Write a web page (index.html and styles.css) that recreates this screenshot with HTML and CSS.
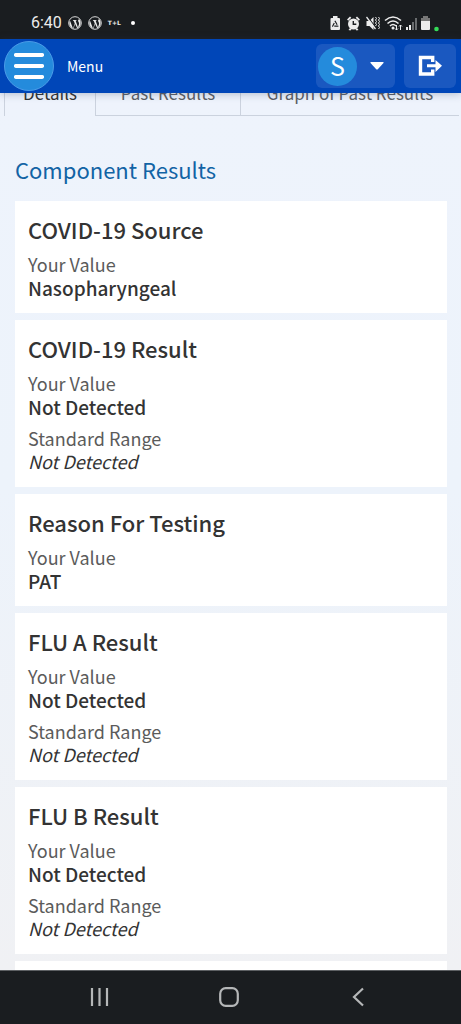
FILE: index.html
```html
<!DOCTYPE html>
<html lang="en">
<head>
<meta charset="utf-8">
<meta name="viewport" content="width=device-width, initial-scale=1">
<title>Component Results</title>
<link rel="stylesheet" href="styles.css">
</head>
<body>
<div class="screen">
  <div class="status">
    <div class="status-group">
      <span class="clock">6:40</span>
      <svg class="wp" viewBox="0 0 24 24" aria-hidden="true"><circle cx="12" cy="12" r="10.8" fill="none" stroke="#e8e8e8" stroke-width="1.6"/><path d="M3.5 8l5 13.4 3.1-8.7L9.7 8H8.5V7h6v1h-1.4l4 11.5 1.7-5.5c.8-2.7-1.5-4-1.5-5.8 0-1.5 1-2.5 2.200-2.500 2 2.500 2.700 5.500 1.700 9.300-1 3.200-3 5-5.200 6.300L12.200 13.500l-3 8.500C5 20.500 2.300 16.500 2.300 12c0-1.500.4-2.800 1.200-4z" fill="#e8e8e8"/></svg>
      <svg class="wp" viewBox="0 0 24 24" aria-hidden="true"><circle cx="12" cy="12" r="10.8" fill="none" stroke="#e8e8e8" stroke-width="1.6"/><path d="M3.5 8l5 13.4 3.1-8.7L9.7 8H8.5V7h6v1h-1.4l4 11.5 1.7-5.5c.8-2.7-1.5-4-1.5-5.8 0-1.500 1-2.500 2.200-2.500 2 2.500 2.700 5.500 1.700 9.300-1 3.200-3 5-5.200 6.300L12.200 13.500l-3 8.500C5 20.500 2.300 16.500 2.300 12c0-1.500.4-2.800 1.200-4z" fill="#e8e8e8"/></svg>
      <span class="carrier">T+L</span>
      <span class="dot"></span>
    </div>
    <svg class="status-icons" width="112" height="20" viewBox="0 0 112 20" aria-hidden="true">
      <g fill="#ececec">
        <path d="M2.500 5H4V3h4.500v2H10q1 0 1 1v10q0 1-1 1H2.500q-1 0-1-1V6q0-1 1-1z"/>
        <path d="M6.200 8.200l2.700 5H3.600z" fill="none" stroke="#1a1d20" stroke-width="1.200" stroke-linejoin="round" stroke-dasharray="4 1.300"/>
        <circle cx="24.500" cy="11" r="5.500"/><path d="M18 6.500l3-3 1.300 1.300-3 3zM31 6.500l-3-3-1.300 1.300 3 3zM19.500 17l1.500-2 1.500 1-1 1.500zM29.500 17L28 15l-1.500 1 1 1.500z"/>
        <path d="M24.300 8v3.300h3" fill="none" stroke="#1a1d20" stroke-width="1.400"/>
        <path d="M37.500 8h3l4-4v13l-4-4h-3z"/>
        <path d="M38.500 3.500l9 12" stroke="#1a1d20" stroke-width="1.200"/><path d="M37.500 4l9 12" stroke="#ececec" stroke-width="1.300"/>
        <path d="M46.500 4l1 1.500-1 1.500 1 1.500-1 1.500 1 1.500-1 1.500M49.500 4l1 1.500-1 1.500 1 1.500-1 1.500 1 1.500-1 1.500 1 1.500-1 1.500" fill="none" stroke="#ececec" stroke-width="1"/>
      </g>
      <g fill="none" stroke="#ececec" stroke-width="1.600"><path d="M56 7.500q8-7 16 0M58.500 10.500q5.500-5 11 0M61 13q3-3 6 0"/><path d="M67.500 12v5M66 15.500l1.500 1.500 1.500-1.500M71.500 17v-5M70 13.500l1.500-1.500 1.500 1.500" stroke-width="1"/></g>
      <circle cx="64" cy="15" r="1.500" fill="#ececec"/>
      <path d="M77 14h2v3h-2zM80 12h2v5h-2z" fill="#ececec"/>
      <path d="M83 9h2v8h-2zM86 5h2v12h-2z" fill="#696c6e"/>
      <path d="M94 3h5v2h-5zM92 5h9v4h-9z" fill="#777"/><path d="M92 8h9v8q0 1-1 1h-7q-1 0-1-1z" fill="#ececec"/>
      <circle cx="107.500" cy="16" r="2.300" fill="#35dc58"/>
    </svg>
  </div>

  <header class="bar">
    <button class="menu" type="button">
      <span class="menu-circle"><svg width="30" height="26" viewBox="0 0 30 26" aria-hidden="true"><path d="M1.800 2h26.400M1.800 13h26.400M1.800 24h26.400" stroke="#fff" stroke-width="3.800" stroke-linecap="round"/></svg></span>
      <span>Menu</span>
    </button>
    <div class="actions">
      <button class="action account" type="button" aria-label="Account S">
        <span class="avatar">S</span>
        <svg width="14" height="8" viewBox="0 0 14 8" aria-hidden="true"><path d="M1 0h12q1 0 .5 1L8 7q-1 1-2 0L.5 1Q0 0 1 0z" fill="#fff"/></svg>
      </button>
      <button class="action logout" type="button" aria-label="Log out">
        <svg width="26" height="22" viewBox="0 0 26 22" aria-hidden="true"><path d="M15.700 7V2.500H3.500v16.500h12.200V14.500" fill="none" stroke="#fff" stroke-width="3.400"/><path d="M10 9.200h8.500V5l6.500 5.700-6.500 6.300v-4.700H10z" fill="#fff"/></svg>
      </button>
    </div>
  </header>

  <main class="content">
    <nav class="tabs">
      <a class="tab tab-active" href="#details">Details</a>
      <a class="tab" href="#past">Past Results</a>
      <a class="tab tab-wide" href="#graph">Graph of Past Results</a>
    </nav>
    <section class="results" id="details">
      <h1 class="heading">Component Results</h1>
      <article class="card">
        <h2 class="name">COVID-19 Source</h2>
        <dl class="pair"><dt>Your Value</dt><dd>Nasopharyngeal</dd></dl>
      </article>
      <article class="card">
        <h2 class="name">COVID-19 Result</h2>
        <dl class="pair"><dt>Your Value</dt><dd>Not Detected</dd></dl>
        <dl class="pair"><dt>Standard Range</dt><dd class="range">Not Detected</dd></dl>
      </article>
      <article class="card">
        <h2 class="name">Reason For Testing</h2>
        <dl class="pair"><dt>Your Value</dt><dd>PAT</dd></dl>
      </article>
      <article class="card">
        <h2 class="name">FLU A Result</h2>
        <dl class="pair"><dt>Your Value</dt><dd>Not Detected</dd></dl>
        <dl class="pair"><dt>Standard Range</dt><dd class="range">Not Detected</dd></dl>
      </article>
      <article class="card">
        <h2 class="name">FLU B Result</h2>
        <dl class="pair"><dt>Your Value</dt><dd>Not Detected</dd></dl>
        <dl class="pair"><dt>Standard Range</dt><dd class="range">Not Detected</dd></dl>
      </article>
      <article class="card"></article>
    </section>
  </main>

  <nav class="system">
    <button class="key" type="button" aria-label="Recent apps"><svg width="20" height="20" viewBox="0 0 20 20"><path d="M2 1v18M9.500 1v18M17 1v18" stroke="#b5b7b8" stroke-width="2.200"/></svg></button>
    <button class="key" type="button" aria-label="Home"><svg width="20" height="20" viewBox="0 0 20 20"><rect x="1.200" y="1.200" width="17.600" height="17.600" rx="5.500" fill="none" stroke="#b5b7b8" stroke-width="2.200"/></svg></button>
    <button class="key" type="button" aria-label="Back"><svg width="20" height="20" viewBox="0 0 20 20"><path d="M15 1.500L6 10l9 8.500" fill="none" stroke="#b5b7b8" stroke-width="2.200"/></svg></button>
  </nav>
</div>
</body>
</html>
```
FILE: styles.css
```css
* { box-sizing: border-box; }
body {
  margin: 0;
  font-family: "Noto Sans CJK SC", "Open Sans", sans-serif;
  color: #333;
}
button { border: 0; margin: 0; padding: 0; background: none; font: inherit; color: inherit; }
h1, h2, dl, dd { margin: 0; }
svg { display: block; flex: none; }

.screen { display: flex; flex-direction: column; height: 100vh; }

.status {
  flex: none;
  display: flex;
  align-items: center;
  justify-content: space-between;
  height: 39px;
  padding: 7px 20px 0 31px;
  background: #1a1d20;
  color: #ececec;
}
.status-group { display: flex; align-items: center; gap: 6px; }
.clock { font: 16px/20px Roboto, sans-serif; }
.wp { width: 14px; height: 14px; }
.carrier { font: bold 6px/8px "DejaVu Sans", sans-serif; }
.dot { width: 4px; height: 4px; margin-left: 4px; border-radius: 50%; background: #fff; }

.bar {
  flex: none;
  position: relative;
  display: flex;
  justify-content: space-between;
  align-items: center;
  height: 54px;
  padding: 0 5px 0 4px;
  background: #0046b8;
  color: #fff;
  box-shadow: 0 1px 8px rgba(40, 60, 100, 0.3);
}
.menu { display: flex; align-items: center; gap: 13px; font-size: 14px; line-height: 20px; }
.menu-circle {
  display: grid;
  place-items: center;
  width: 50px;
  height: 50px;
  border: 1px solid #4a9be8;
  border-radius: 50%;
  background: #248bdc;
}
.actions { display: flex; gap: 9px; }
.action { display: flex; align-items: center; height: 44px; border-radius: 6px; background: #1a58c0; }
.account { gap: 13px; width: 79px; padding-left: 2px; }
.logout { justify-content: center; width: 52px; }
.avatar {
  width: 39px;
  height: 39px;
  border-radius: 50%;
  background: #248bdc;
  font-size: 25px;
  line-height: 37px;
  text-align: center;
}

.content {
  flex: 1;
  min-height: 0;
  overflow: hidden;
  background: linear-gradient(#eef3fc, #edf3fb 45%, #f0f1f4);
}
.tabs { display: flex; margin: -26px 2px 0 4px; }
.tab {
  flex: 0 1 145px;
  height: 49px;
  padding-top: 14px;
  border-right: 1px solid #cbd2de;
  border-bottom: 1px solid #cbd2de;
  color: #5c5f66;
  font-size: 17px;
  line-height: 24px;
  text-align: center;
  text-decoration: none;
  white-space: nowrap;
}
.tab-active { flex-basis: 92px; border-left: 1px solid #cbd2de; border-bottom: 0; color: #333; }
.tab-wide { flex: 1 0 auto; border-right: 0; }

.results { display: flex; flex-direction: column; gap: 7px; padding: 38px 14px 0 15px; }
.heading {
  margin-bottom: 10px;
  color: #1263a5;
  font-size: 22px;
  font-weight: 400;
  line-height: 30px;
}
.card { min-height: 112px; padding: 13px 13px 14px; background: #fff; }
.name { margin-bottom: 9px; font-size: 22px; font-weight: 500; line-height: 30px; }
.pair { font-size: 18px; line-height: 23px; }
.pair + .pair { margin-top: 9px; }
.pair dt { color: #5b5b5b; }
.pair dd { font-size: 19px; font-weight: 500; }
.pair .range { font-size: 18px; font-weight: 400; font-style: italic; }

.system {
  flex: none;
  display: flex;
  justify-content: space-between;
  height: 54px;
  padding: 0 79px 2px 76px;
  border-top: 1px solid #5d6063;
  background: #1a1d20;
}
.key { display: grid; place-items: center; width: 48px; }
```
